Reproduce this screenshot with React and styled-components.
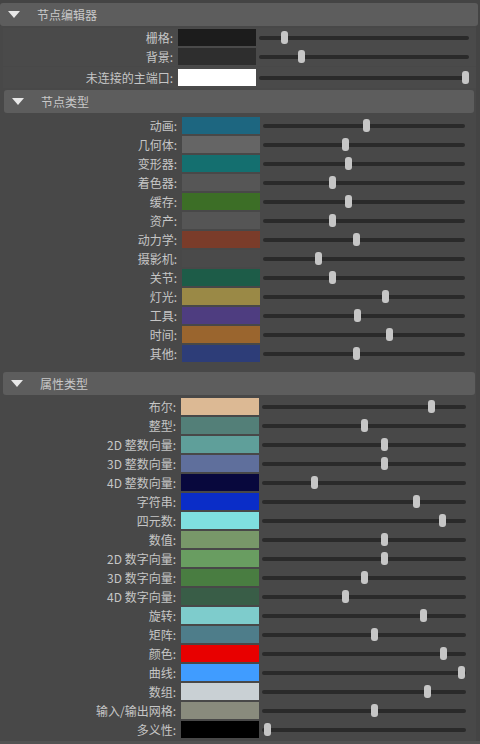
import styled, { createGlobalStyle } from "styled-components";

const GlobalStyle = createGlobalStyle`
  html, body {
    margin: 0;
    padding: 0;
    background: #444444;
  }
  body {
    font-family: "Noto Sans CJK SC", "Noto Sans", "Liberation Sans", sans-serif;
    font-size: 12px;
    color: #c6c6c6;
  }
`;

const editorRows = [
  { label: "栅格:", color: "#1c1c1c", value: 0.106 },
  { label: "背景:", color: "#2e2e2e", value: 0.19 },
];

const portRows = [{ label: "未连接的主端口:", color: "#ffffff", value: 1 }];

const nodeRows = [
  { label: "动画:", color: "#1d6680", value: 0.515 },
  { label: "几何体:", color: "#656565", value: 0.403 },
  { label: "变形器:", color: "#146f6f", value: 0.418 },
  { label: "着色器:", color: "#565656", value: 0.336 },
  { label: "缓存:", color: "#3c6e26", value: 0.423 },
  { label: "资产:", color: "#555555", value: 0.336 },
  { label: "动力学:", color: "#7a3c2a", value: 0.459 },
  { label: "摄影机:", color: "#4a4a4a", value: 0.269 },
  { label: "关节:", color: "#1d5c48", value: 0.341 },
  { label: "灯光:", color: "#9a8946", value: 0.608 },
  { label: "工具:", color: "#4e3d80", value: 0.469 },
  { label: "时间:", color: "#9a652e", value: 0.633 },
  { label: "其他:", color: "#2d3d78", value: 0.464 },
];

const attrRows = [
  { label: "布尔:", color: "#dcb994", value: 0.845 },
  { label: "整型:", color: "#537f78", value: 0.5 },
  { label: "2D 整数向量:", color: "#5f9f9a", value: 0.602 },
  { label: "3D 整数向量:", color: "#5f6f9c", value: 0.602 },
  { label: "4D 整数向量:", color: "#08083d", value: 0.251 },
  { label: "字符串:", color: "#0a2dc8", value: 0.764 },
  { label: "四元数:", color: "#7fe0e0", value: 0.896 },
  { label: "数值:", color: "#789869", value: 0.602 },
  { label: "2D 数字向量:", color: "#699d61", value: 0.602 },
  { label: "3D 数字向量:", color: "#497d41", value: 0.5 },
  { label: "4D 数字向量:", color: "#395d47", value: 0.404 },
  { label: "旋转:", color: "#7ecccc", value: 0.8 },
  { label: "矩阵:", color: "#4e7d8a", value: 0.551 },
  { label: "颜色:", color: "#e80000", value: 0.906 },
  { label: "曲线:", color: "#409cff", value: 0.997 },
  { label: "数组:", color: "#c9d0d4", value: 0.82 },
  { label: "输入/输出网格:", color: "#898b7d", value: 0.551 },
  { label: "多义性:", color: "#000000", value: 0.008 },
];

const ColorSlider = ({ label, color, value, labelWidth, trailing }) => (
  <Row $labelWidth={labelWidth} $trailing={trailing}>
    <Label>{label}</Label>
    <Swatch $color={color} />
    <Track>
      <Thumb style={{ left: `calc((100% - 7px) * ${value})` }} />
    </Track>
  </Row>
);

const FrameHeader = ({ title, offset }) => (
  <Header $offset={offset}>
    <Arrow />
    <HeaderTitle>{title}</HeaderTitle>
  </Header>
);

export default function App() {
  return (
    <>
      <GlobalStyle />
      <Page>
        <FrameHeader title="节点编辑器" offset={0} />
        <Content>
          <RowGroup $pad="1px 0">
            {editorRows.map((r) => (
              <ColorSlider key={r.label} {...r} labelWidth={172} trailing={7} />
            ))}
          </RowGroup>
          <RowGroup $pad="2px 0">
            {portRows.map((r) => (
              <ColorSlider key={r.label} {...r} labelWidth={172} trailing={7} />
            ))}
          </RowGroup>

          <SubFrame $left={1} $right={2}>
            <FrameHeader title="节点类型" />
            <RowList $top={4}>
              {nodeRows.map((r) => (
                <ColorSlider key={r.label} {...r} labelWidth={175} trailing={9} />
              ))}
            </RowList>
          </SubFrame>

          <SubFrame $left={0} $right={1} $top={10}>
            <FrameHeader title="属性类型" />
            <RowList $top={3}>
              {attrRows.map((r) => (
                <ColorSlider key={r.label} {...r} labelWidth={175} trailing={9} />
              ))}
            </RowList>
          </SubFrame>
        </Content>
        <BottomEdge />
      </Page>
    </>
  );
}

const Page = styled.div`
  width: 480px;
  height: 744px;
  overflow: hidden;
  display: flex;
  flex-direction: column;
  padding: 3px 2px 0 0;
  box-sizing: border-box;
  background: #444444;
  position: relative;
`;

const Header = styled.div`
  flex: none;
  height: 23px;
  display: flex;
  align-items: center;
  background: #5d5d5d;
  border-radius: 3px;
  padding-left: ${(p) => 8 + (p.$offset || 0)}px;
  box-sizing: border-box;
`;

const Arrow = styled.span`
  width: 0;
  height: 0;
  border-left: 6px solid transparent;
  border-right: 6px solid transparent;
  border-top: 7px solid #e8e8e8;
`;

const HeaderTitle = styled.span`
  margin-left: 17px;
  color: #c8c8c8;
  font-size: 12px;
  line-height: 23px;
`;

const Content = styled.div`
  flex: 1;
  display: flex;
  flex-direction: column;
  padding: 2px 0 0 3px;
  margin-right: 2px;
  min-height: 0;
  background: #484848;
`;

const RowGroup = styled.div`
  display: flex;
  flex-direction: column;
  gap: 2px;
  padding: ${(p) => p.$pad};
  background: #4a4a4a;
  & + & {
    margin-top: 1px;
  }
`;

const SubFrame = styled.div`
  display: flex;
  flex-direction: column;
  margin: ${(p) => p.$top || 2}px ${(p) => p.$right}px 0 ${(p) => p.$left}px;
`;

const RowList = styled.div`
  display: flex;
  flex-direction: column;
  gap: 2px;
  padding-top: ${(p) => p.$top}px;
`;

const Row = styled.div`
  display: grid;
  grid-template-columns: ${(p) => p.$labelWidth}px 78px 1fr;
  column-gap: 3px;
  align-items: center;
  height: 17px;
  padding-right: ${(p) => p.$trailing}px;
`;

const Label = styled.span`
  text-align: right;
  padding-right: 2px;
  white-space: nowrap;
  font-size: 12px;
  line-height: 17px;
  color: #c6c6c6;
`;

const Swatch = styled.div`
  height: 17px;
  background: ${(p) => p.$color};
`;

const Track = styled.div`
  position: relative;
  height: 4px;
  border-radius: 2px;
  background: #2a2a2a;
`;

const Thumb = styled.div`
  position: absolute;
  top: -5px;
  width: 7px;
  height: 13px;
  border-radius: 3px;
  background: #c6c6c6;
`;

const BottomEdge = styled.div`
  position: absolute;
  left: 0;
  right: 0;
  bottom: 0;
  height: 3px;
  background: #525252;
`;
